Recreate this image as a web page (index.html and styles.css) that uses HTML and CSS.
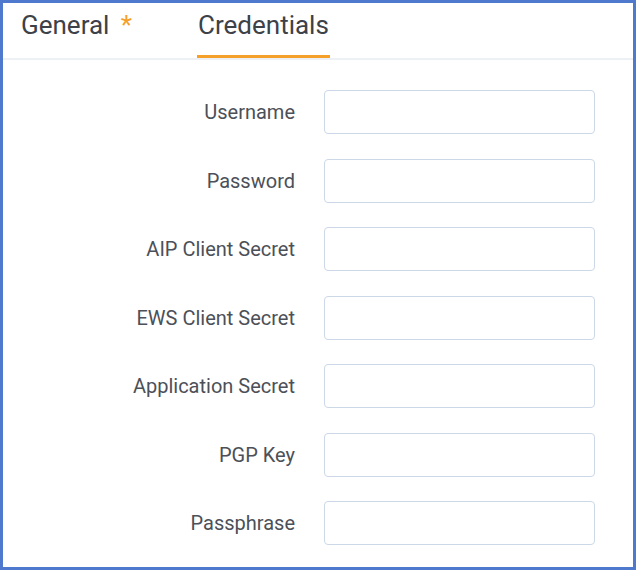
FILE: index.html
```html
<!DOCTYPE html>
<html>
<head>
<meta charset="utf-8">
<link rel="stylesheet" href="styles.css">
</head>
<body>
<div class="frame">
  <div class="tabs">
    <div class="tab">General <span class="req">*</span></div>
    <div class="tab active">Credentials</div>
  </div>
  <form class="form">
    <label class="label">Username</label><input class="field" type="text">
    <label class="label">Password</label><input class="field" type="text">
    <label class="label">AIP Client Secret</label><input class="field" type="text">
    <label class="label">EWS Client Secret</label><input class="field" type="text">
    <label class="label">Application Secret</label><input class="field" type="text">
    <label class="label">PGP Key</label><input class="field" type="text">
    <label class="label">Passphrase</label><input class="field" type="text">
  </form>
</div>
</body>
</html>
```
FILE: styles.css
```css
html, body {
  margin: 0;
  padding: 0;
  background: #ffffff;
}
.frame {
  box-sizing: border-box;
  width: 636px;
  height: 570px;
  border: 3px solid #4f79cc;
  background: #ffffff;
  font-family: Roboto, "Liberation Sans", sans-serif;
}
.tabs {
  display: flex;
  gap: 64px;
  padding-left: 17px;
  border-bottom: 2px solid #edf1f6;
}
.tab {
  font-size: 26px;
  line-height: 28px;
  color: #3d4148;
  padding: 8px 1px 16px;
  border-bottom: 3px solid transparent;
}
.tab.active {
  border-bottom-color: #f5a02a;
}
.req {
  color: #f5a02a;
  margin-left: 5px;
}
.form {
  display: grid;
  grid-template-columns: 1fr 271px;
  column-gap: 29px;
  row-gap: 24.5px;
  align-items: center;
  padding: 30px 38px 0 0;
  margin: 0;
}
.label {
  text-align: right;
  font-size: 20px;
  color: #4c5058;
}
.field {
  box-sizing: border-box;
  height: 44px;
  width: 271px;
  margin: 0;
  border: 1.5px solid #ccd8e8;
  border-radius: 4px;
  background: #ffffff;
  outline: none;
}
```
